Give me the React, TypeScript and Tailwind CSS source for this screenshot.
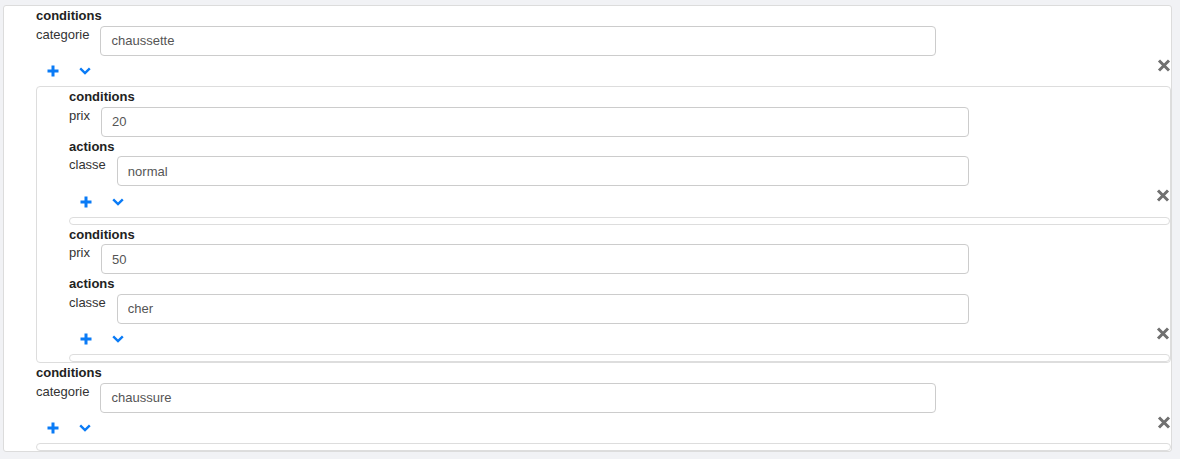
import React from "react";

type Field = { label: string; value: string };
type Rule = { conditions: Field[]; actions?: Field[]; children?: Rule[] };

const data: Rule[] = [
  {
    conditions: [{ label: "categorie", value: "chaussette" }],
    children: [
      {
        conditions: [{ label: "prix", value: "20" }],
        actions: [{ label: "classe", value: "normal" }],
      },
      {
        conditions: [{ label: "prix", value: "50" }],
        actions: [{ label: "classe", value: "cher" }],
      },
    ],
  },
  {
    conditions: [{ label: "categorie", value: "chaussure" }],
  },
];

function PlusIcon() {
  return (
    <svg width="12" height="12" viewBox="0 0 12 12" fill="none">
      <path d="M6 0.5V11.5M0.5 6H11.5" stroke="#0a7bf6" strokeWidth="3" />
    </svg>
  );
}

function ChevronIcon() {
  return (
    <svg width="12" height="8" viewBox="0 0 12 8" fill="none">
      <path d="M1.2 1.3L6 6L10.8 1.3" stroke="#0a7bf6" strokeWidth="2.4" strokeLinejoin="miter" />
    </svg>
  );
}

function CloseIcon() {
  return (
    <svg width="14" height="13" viewBox="0 0 14 13" fill="none">
      <path d="M2 1.5L12 11.5M12 1.5L2 11.5" stroke="#707070" strokeWidth="3" />
    </svg>
  );
}

function Row({ field }: { field: Field }) {
  return (
    <div className="flex w-[900px]">
      <label className="mr-[11px] pt-px text-[13px] leading-[15px] text-[#333]">{field.label}</label>
      <input
        readOnly
        value={field.value}
        className="h-[30px] min-w-0 flex-1 rounded-[4px] border border-[#ccc] bg-white pl-[10px] text-[13px] text-[#555] outline-none"
      />
    </div>
  );
}

function Heading({ children }: { children: React.ReactNode }) {
  return <div className="text-[13px] font-bold leading-[19.5px] text-[#222]">{children}</div>;
}

function RuleView({ rule }: { rule: Rule }) {
  return (
    <div>
      <Heading>conditions</Heading>
      {rule.conditions.map((f, i) => (
        <Row key={i} field={f} />
      ))}
      {rule.actions && (
        <>
          <Heading>actions</Heading>
          {rule.actions.map((f, i) => (
            <Row key={i} field={f} />
          ))}
        </>
      )}
      <div className="flex h-[30.5px] items-start justify-between">
        <div className="flex h-[30.5px] items-center pt-px">
          <button className="flex w-[33px] items-center justify-center">
            <PlusIcon />
          </button>
          <button className="flex w-[32px] items-center justify-center">
            <ChevronIcon />
          </button>
        </div>
        <button className="mt-[3px] flex">
          <CloseIcon />
        </button>
      </div>
      <div className="min-h-[8px] rounded-[4px] border border-[#ddd] pl-8">
        {rule.children?.map((c, i) => (
          <RuleView key={i} rule={c} />
        ))}
      </div>
    </div>
  );
}

export default function App() {
  return (
    <div className="h-[459px] w-[1180px] overflow-hidden bg-[#f1f2f5] pt-[5px] font-['Liberation_Sans',Arial,sans-serif]">
      <div className="ml-[3px] w-[1169px] rounded-[3px] border border-[#dcdcdc] bg-white pl-8">
        {data.map((r, i) => (
          <RuleView key={i} rule={r} />
        ))}
      </div>
    </div>
  );
}
